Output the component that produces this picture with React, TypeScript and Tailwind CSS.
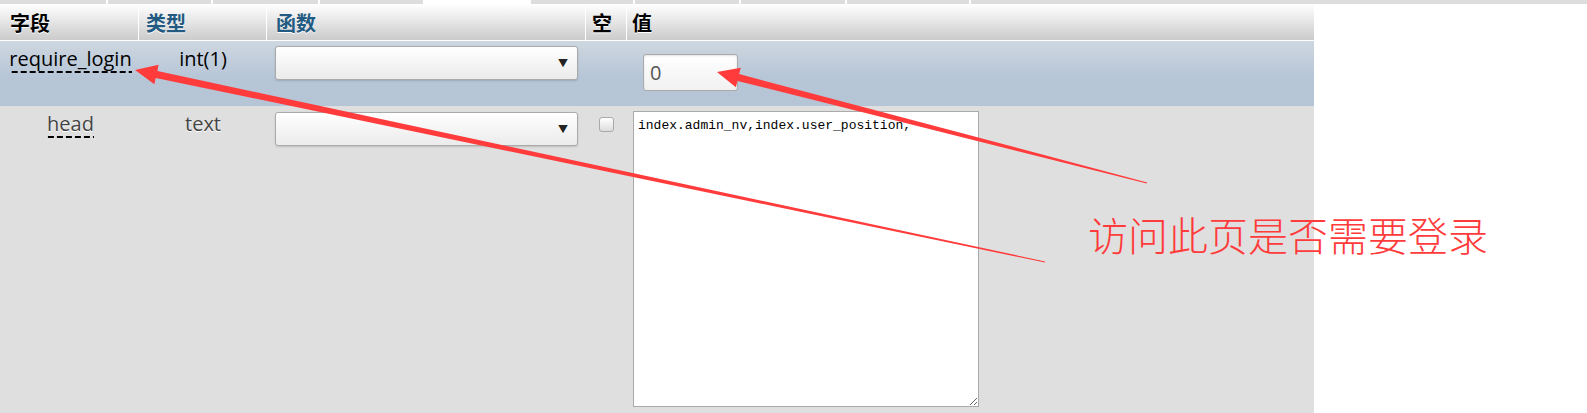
import React from 'react'

// bottom edge of the tab bar above the insert form
const tabs = [
  { w: 108 },
  { w: 105 },
  { w: 107 },
  { w: 105 },
  { w: 106, active: true },
  { w: 104 },
  { w: 106 },
  { w: 106 },
  { w: 124 },
]

const tabWidth: Record<number, string> = {
  104: 'w-[104px]',
  105: 'w-[105px]',
  106: 'w-[106px]',
  107: 'w-[107px]',
  108: 'w-[108px]',
  124: 'w-[124px]',
}

function FakeSelect() {
  return (
    <div className="flex h-[34px] w-[303px] items-center justify-end rounded-[3px] border border-[#aaa] bg-[linear-gradient(#ffffff,#ebebeb)] pr-[9px] shadow-[0_1px_2px_rgba(0,0,0,0.15)]">
      <span className="text-[10px] leading-none text-[#222]">▼</span>
    </div>
  )
}

// field name with the dotted "has comment" underline
function FieldName({ children }: { children: React.ReactNode }) {
  return (
    <span className="bg-[linear-gradient(to_right,#000_66%,transparent_0)] bg-[length:9px_2px] bg-bottom bg-repeat-x pb-[1px]">
      {children}
    </span>
  )
}

function Arrows() {
  return (
    <svg
      className="pointer-events-none absolute left-0 top-0"
      width={1587}
      height={413}
      viewBox="0 0 1587 413"
    >
      {/* arrow to require_login */}
      <polygon points="135,70 158.6,64.7 157.4,71.1 1045.1,261.4 1044.9,262.6 155.7,77.9 154.4,84.3" fill="#ff3b3b" />
      {/* arrow to the value input */}
      <polygon points="717,72 740.8,67.8 739.1,74.1 1147.2,182.4 1146.8,183.6 737.5,80.9 735.8,87.2" fill="#ff3b3b" />
    </svg>
  )
}

export default function App() {
  return (
    <div className="relative h-[413px] w-[1587px] overflow-hidden bg-white font-['Open_Sans','Noto_Sans_CJK_SC',sans-serif]">
      <div className="flex h-[4px] bg-[#dddddd]">
        {tabs.map((t, i) => (
          <div
            key={i}
            className={`${tabWidth[t.w]} h-full border-r-2 border-white ${t.active ? 'bg-white' : 'bg-[#dddddd]'}`}
          />
        ))}
        <div className="flex-1" />
      </div>

      <div className="flex h-[409px] w-[1314px] flex-col">
        {/* header */}
        <div className="grid h-[37px] grid-cols-[139px_128px_319px_41px_687px] border-b border-white bg-[linear-gradient(#ffffff,#cbcbcb)] text-[20px] font-bold leading-[27px] [text-shadow:0_1px_0_#fff]">
          <div className="border-r border-white pl-[10px] pt-[6px] text-black">字段</div>
          <div className="border-r border-white pl-[7px] pt-[6px] text-[#235a81]">类型</div>
          <div className="border-r border-white pl-[9px] pt-[6px] text-[#235a81]">函数</div>
          <div className="border-r border-white pl-[6px] pt-[6px] text-black">空</div>
          <div className="pl-[5px] pt-[6px] text-black">值</div>
        </div>

        {/* marked row */}
        <div className="grid h-[65px] grid-cols-[139px_128px_319px_41px_687px] bg-[linear-gradient(#ced7e0,#b7c6d7_55%,#b6c5d6)] text-[20px] leading-[27px] text-black">
          <div className="pl-[2px] pt-[4px] text-center">
            <FieldName>require_login</FieldName>
          </div>
          <div className="pt-[4px] text-center">int(1)</div>
          <div className="pl-[8px] pt-[5px]">
            <FakeSelect />
          </div>
          <div />
          <div className="pl-[16px] pt-[13px]">
            <input
              readOnly
              value="0"
              className="h-[37px] w-[95px] rounded-[3px] border border-[#aaa] bg-[linear-gradient(#ffffff,#f1f1f1)] pl-[6px] text-[20px] text-[#555] shadow-[inset_0_1px_2px_rgba(0,0,0,0.12)] outline-none"
            />
          </div>
        </div>

        {/* regular row */}
        <div className="grid flex-1 grid-cols-[139px_128px_319px_41px_687px] bg-[#dfdfdf] text-[20px] leading-[27px] text-[#444] [text-shadow:0_1px_0_#fff]">
          <div className="pl-[2px] pt-[4px] text-center">
            <FieldName>head</FieldName>
          </div>
          <div className="pt-[4px] text-center">text</div>
          <div className="pl-[8px] pt-[6px]">
            <FakeSelect />
          </div>
          <div className="flex justify-center pt-[11px]">
            <div className="h-[15px] w-[15px] rounded-[3px] border border-[#aaa] bg-[linear-gradient(#ffffff,#dcdcdc)]" />
          </div>
          <div className="pl-[6px] pt-[5px]">
            <textarea
              readOnly
              defaultValue="index.admin_nv,index.user_position,"
              className="h-[296px] w-[346px] border border-[#aaa] bg-white px-[4px] py-[6px] font-['Liberation_Mono',monospace] text-[13px] leading-[16px] text-black outline-none [text-shadow:none]"
            />
          </div>
        </div>
      </div>

      <Arrows />

      <div className="absolute left-[1088px] top-[214px] text-[40px] font-light leading-[40px] text-[#ff3b3b] font-['Noto_Sans_CJK_SC',sans-serif]">
        访问此页是否需要登录
      </div>
    </div>
  )
}
